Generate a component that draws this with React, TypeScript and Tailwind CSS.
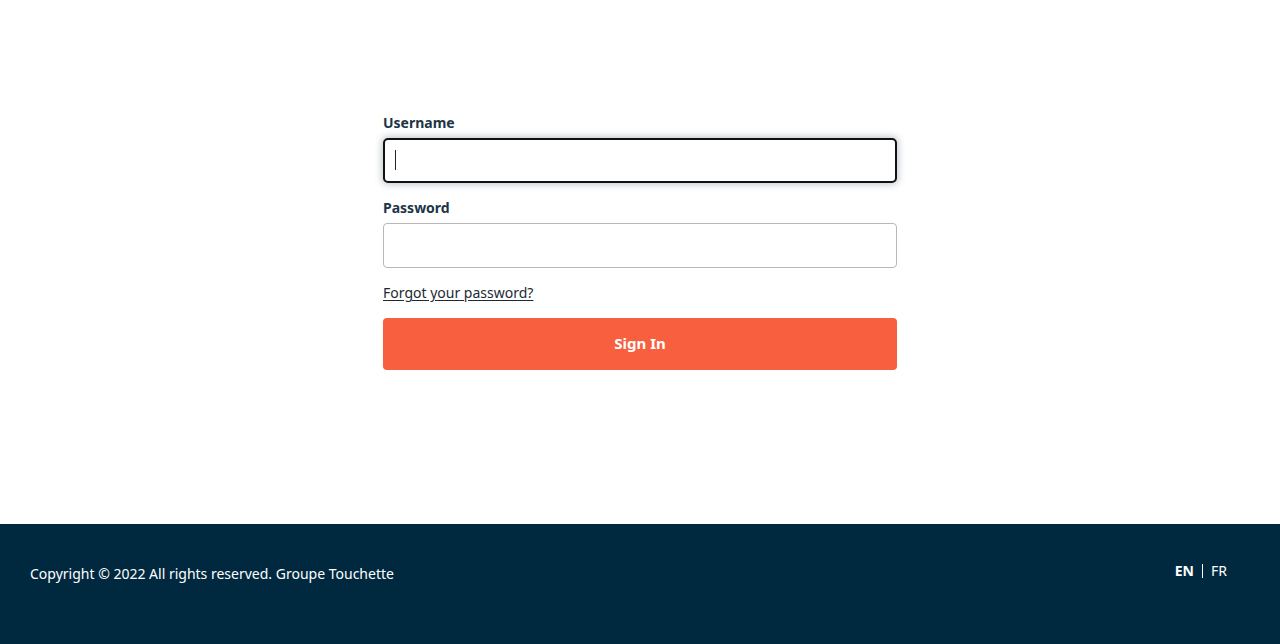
import React from "react";

const font = { fontFamily: '"Noto Sans", "Open Sans", sans-serif' };

export default function App() {
    return (
        <div className="min-h-screen flex flex-col bg-white" style={font}>
            {/* Formulaire */}
            <main className="h-[524px] flex justify-center pt-[113px]">
                <form className="w-[514px] flex flex-col" onSubmit={(e) => e.preventDefault()}>
                    <label className="text-[14px] leading-5 font-bold text-[#1c3547]">Username</label>
                    <div className="relative mt-[5px]">
                        <input
                            type="text"
                            className="w-full h-[45px] rounded-[5px] border-2 border-[#111] bg-white px-3 outline-none shadow-[0_0_6px_2px_rgba(40,60,80,0.25)]"
                        />
                        <span className="absolute left-[12px] top-[12px] w-px h-[20px] bg-[#222]" />
                    </div>

                    <label className="mt-[15px] text-[14px] leading-5 font-bold text-[#1c3547]">Password</label>
                    <input
                        type="password"
                        className="mt-[5px] w-full h-[45px] rounded-[4px] border border-[#b8b8b8] bg-white px-3 outline-none"
                    />

                    <a href="#" className="mt-[15px] self-start text-[14px] leading-5 text-[#1d2a33] underline underline-offset-2">
                        Forgot your password?
                    </a>

                    <button
                        type="submit"
                        className="mt-[15px] h-[52px] w-full rounded-[4px] bg-[#f75f3e] text-white text-[15px] leading-5 font-bold pb-[3px]"
                    >
                        Sign In
                    </button>
                </form>
            </main>

            {/* Pied de page */}
            <footer className="h-[120px] bg-[#002940] text-white flex items-start justify-between pl-[30px] pr-[53px] pt-[40px]">
                <p className="text-[14px] leading-5">Copyright © 2022 All rights reserved. Groupe Touchette</p>
                <div className="flex items-center text-[14px] leading-5 -mt-[3px]">
                    <span className="font-bold">EN</span>
                    <span className="mx-[8px] w-px h-[14px] bg-white" />
                    <span>FR</span>
                </div>
            </footer>
        </div>
    );
}
